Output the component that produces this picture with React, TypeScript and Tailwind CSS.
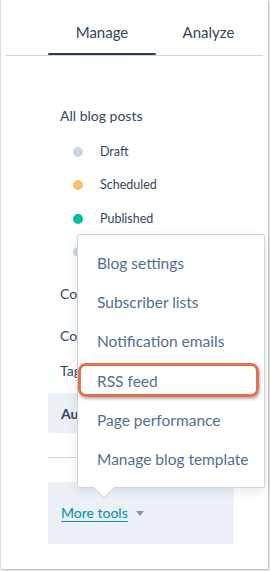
import React from "react";

const font = { fontFamily: "Lato, 'Open Sans', Arial, sans-serif" };

function StatusRow({ color, label }: { color: string; label: string }) {
  return (
    <div className="flex h-[33.5px] items-center pl-[13px]">
      <span className={`block h-[10px] w-[10px] rounded-full ${color}`} />
      <span className="ml-[17px] text-[12.5px] leading-[16px] text-[#33475b]">{label}</span>
    </div>
  );
}

const menuItems = [
  "Blog settings",
  "Subscriber lists",
  "Notification emails",
  "RSS feed",
  "Page performance",
  "Manage blog template",
];

export default function App() {
  return (
    <div className="relative h-[571px] w-[270px] overflow-hidden bg-white" style={font}>
      <div className="h-[569px] w-[268px] border-l border-[#dcdcdc] bg-white shadow-[1px_1px_2px_rgba(0,0,0,0.35)]">
        {/* Tabs */}
        <div className="mx-[5px] flex h-[56px] border-b border-[#cbd6e2] pl-[42px]">
          <div className="flex w-[108px] flex-col items-center">
            <span className="mt-[22px] text-[15px] leading-[20px] text-[#33475b]">Manage</span>
            <span className="mt-[11px] block h-[4px] w-full rounded-full bg-[#2d3e50]" />
          </div>
          <div className="flex w-[105px] flex-col items-center">
            <span className="mt-[22px] text-[15px] leading-[20px] text-[#33475b]">Analyze</span>
          </div>
        </div>

        {/* Sidebar content */}
        <div className="flex flex-col pl-[47px] pr-[34px]">
          <div className="mt-[50px] pl-[12px] text-[14px] leading-[20px] text-[#33475b]">All blog posts</div>
          <div className="mt-[9px] flex flex-col pl-[12px]">
            <StatusRow color="bg-[#cbd6e2]" label="Draft" />
            <StatusRow color="bg-[#f5c26b]" label="Scheduled" />
            <StatusRow color="bg-[#00bda5]" label="Published" />
            <StatusRow color="bg-[#cbd6e2]" label="Archived" />
          </div>
          <div className="mt-[15px] pl-[12px] text-[14px] leading-[20px] text-[#33475b]">Comments</div>
          <div className="mt-[22px] pl-[12px] text-[14px] leading-[20px] text-[#33475b]">Content strategy</div>
          <div className="mt-[15px] pl-[12px] text-[14px] leading-[20px] text-[#33475b]">Tags</div>
          <div className="mt-[12px] flex h-[40px] items-center rounded-[3px] bg-[#eaf0f6] pl-[13px] text-[14px] font-bold text-[#33475b]">
            Authors
          </div>
          <div className="mt-[24px] h-px bg-[#cbd6e2]" />
          <div className="mt-[24px] flex h-[62px] items-center bg-[#eaf0f6] pl-[13px]">
            <span className="text-[14px] leading-[20px] text-[#0091ae] underline decoration-1 underline-offset-[3px]">
              More tools
            </span>
            <svg className="ml-[8px]" width="8" height="5" viewBox="0 0 8 5">
              <path d="M0 0 L8 0 L4 5 Z" fill="#7c98b6" />
            </svg>
          </div>
        </div>
      </div>

      {/* Dropdown menu */}
      <div className="absolute left-[77px] top-[234px] w-[188px] rounded-[2px] border border-[#cbd6e2] bg-white py-[8px] shadow-[0_3px_10px_rgba(45,62,80,0.12)]">
        {menuItems.map((item) => (
          <div key={item} className="relative flex h-[39.3px] items-center pl-[19px]">
            <span className="text-[15.5px] leading-[20px] text-[#516f90]">{item}</span>
            {item === "RSS feed" && (
              <span className="absolute bottom-[3px] left-0 right-[5px] top-[2px] rounded-[8px] border-[3px] border-[#e0714f] shadow-[1px_2px_3px_rgba(0,0,0,0.3)]" />
            )}
          </div>
        ))}
        {/* caret */}
        <span className="absolute bottom-[-8px] left-[18px] block h-[16px] w-[16px] rotate-45 border-b border-r border-[#cbd6e2] bg-white" />
      </div>
    </div>
  );
}
